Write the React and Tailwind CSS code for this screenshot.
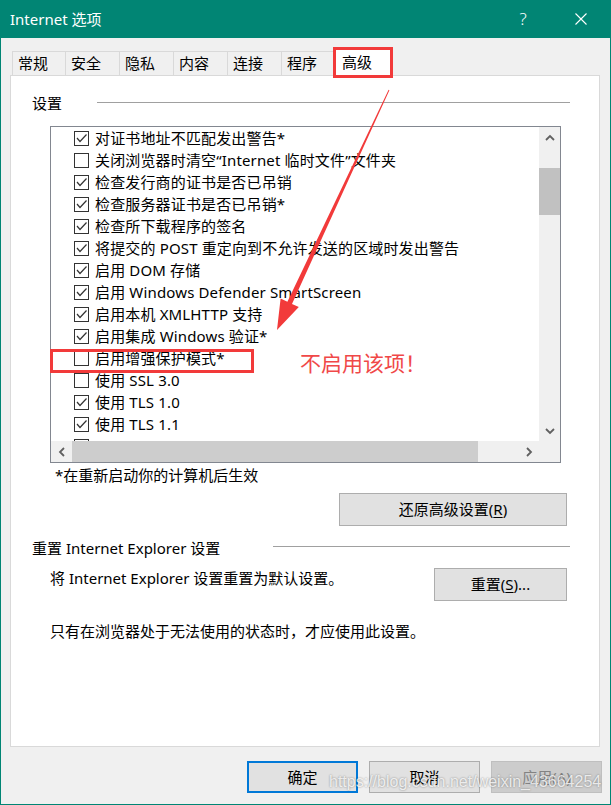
import React from 'react'

const FONT = "font-['Noto_Sans','Noto_Sans_CJK_SC',sans-serif]"

const ITEMS = [
  { label: '对证书地址不匹配发出警告*', checked: true },
  { label: '关闭浏览器时清空“Internet 临时文件”文件夹', checked: false },
  { label: '检查发行商的证书是否已吊销', checked: true },
  { label: '检查服务器证书是否已吊销*', checked: true },
  { label: '检查所下载程序的签名', checked: true },
  { label: '将提交的 POST 重定向到不允许发送的区域时发出警告', checked: true },
  { label: '启用 DOM 存储', checked: true },
  { label: '启用 Windows Defender SmartScreen', checked: true },
  { label: '启用本机 XMLHTTP 支持', checked: true },
  { label: '启用集成 Windows 验证*', checked: true },
  { label: '启用增强保护模式*', checked: false },
  { label: '使用 SSL 3.0', checked: false },
  { label: '使用 TLS 1.0', checked: true },
  { label: '使用 TLS 1.1', checked: true },
  // only the top of this row's box peeks out above the scrollbar
  { label: '', checked: true },
]

const TABS = ['常规', '安全', '隐私', '内容', '连接', '程序']

function Check({ checked }) {
  return (
    <span className="w-[15px] h-[15px] border border-[#333333] bg-white shrink-0 flex">
      {checked && (
        <svg width="13" height="13" viewBox="0 0 13 13">
          <path d="M2 6 L5 9.5 L11.5 2.5" fill="none" stroke="#333333" strokeWidth="1.2" />
        </svg>
      )}
    </span>
  )
}

// small scrollbar arrows
function Chevron({ dir }) {
  const d = {
    up: 'M1 6 L5 2 L9 6',
    down: 'M1 2 L5 6 L9 2',
    left: 'M6 1 L2 5 L6 9',
    right: 'M2 1 L6 5 L2 9',
  }[dir]
  const vertical = dir === 'up' || dir === 'down'
  return (
    <svg width={vertical ? 10 : 8} height={vertical ? 8 : 10} viewBox={vertical ? '0 0 10 8' : '0 0 8 10'}>
      <path d={d} fill="none" stroke="#606060" strokeWidth="1.8" />
    </svg>
  )
}

function Button({ children, className = '' }) {
  return (
    <button className={`h-[33px] bg-[#e1e1e1] border border-[#adadad] text-[15px] text-black leading-none flex items-center justify-center ${className}`}>
      {children}
    </button>
  )
}

export default function App() {
  return (
    <div className={`relative w-[611px] h-[805px] bg-[#018574] px-px pb-px flex flex-col text-black ${FONT}`}>
      {/* title bar */}
      <div className="h-[38px] shrink-0 flex items-center text-white">
        <span className="pl-[9px] text-[15px]">Internet 选项</span>
        <div className="ml-auto flex h-full">
          <div className="w-[58px] h-full flex items-center justify-center text-[17px] font-light">?</div>
          <div className="w-[58px] h-full flex items-center justify-center">
            <svg width="12" height="12" viewBox="0 0 12 12">
              <path d="M0.5 0.5 L11.5 11.5 M11.5 0.5 L0.5 11.5" stroke="white" strokeWidth="1.1" />
            </svg>
          </div>
        </div>
      </div>

      <div className="flex-1 bg-[#f0f0f0] flex flex-col">
        {/* tabs */}
        <div className="relative z-10 mt-[10px] pl-[11px] h-[27px] flex items-end">
          {TABS.map((t, i) => (
            <div
              key={t}
              className={`${i === 0 ? 'w-[54px]' : 'w-[55px] -ml-px'} h-[24px] border border-b-0 border-[#d9d9d9] pl-[5px] text-[15px] leading-[23px]`}
            >
              {t}
            </div>
          ))}
          <div className="-ml-[3px] -mb-px w-[58px] h-[28px] border border-b-0 border-[#d9d9d9] bg-white pl-[8px] text-[15px] leading-[27px]">
            高级
          </div>
        </div>

        {/* panel */}
        <div className="ml-[9px] mr-[10px] h-[672px] border border-[#d9d9d9] bg-white pl-[21px] pr-[29px] flex flex-col text-[15px]">
          <div className="mt-[16px] h-[22px] flex items-center">
            <span className="w-[65px] shrink-0 leading-[22px]">设置</span>
            <div className="flex-1 h-px bg-[#a0a0a0] -mt-[2px]" />
          </div>

          <div className="ml-[18px] mt-[12px] w-[511px] h-[337px] border border-[#828790] bg-white grid grid-cols-[1fr_21px] grid-rows-[1fr_21px]">
            <div className="overflow-hidden">
              {ITEMS.map((it, i) => (
                <div key={i} className="h-[22px] flex items-center pl-[23px] whitespace-nowrap tracking-[0.15px]">
                  <Check checked={it.checked} />
                  {it.label && <span className="ml-[6px] leading-[22px]">{it.label}</span>}
                </div>
              ))}
            </div>
            <div className="bg-[#f0f0f0] flex flex-col">
              <div className="h-[21px] flex items-center justify-center">
                <Chevron dir="up" />
              </div>
              <div className="flex-1 pt-[20px]">
                <div className="h-[47px] bg-[#c1c1c1]" />
              </div>
              <div className="h-[21px] flex items-center justify-center">
                <Chevron dir="down" />
              </div>
            </div>
            <div className="bg-[#f0f0f0] flex">
              <div className="w-[21px] flex items-center justify-center">
                <Chevron dir="left" />
              </div>
              <div className="flex-1">
                <div className="w-[406px] h-full bg-[#cdcdcd]" />
              </div>
              <div className="w-[21px] flex items-center justify-center">
                <Chevron dir="right" />
              </div>
            </div>
            <div className="bg-[#f0f0f0]" />
          </div>

          <div className="mt-px ml-[23px] h-[22px] leading-[22px]">*在重新启动你的计算机后生效</div>

          <div className="mt-[7px] flex justify-end">
            <Button className="w-[228px] mr-[3px]">
              还原高级设置(<span className="underline underline-offset-2">R</span>)
            </Button>
          </div>

          <div className="mt-[11px] h-[22px] flex items-center">
            <span className="w-[241px] shrink-0 leading-[22px]">重置 Internet Explorer 设置</span>
            <div className="flex-1 h-px bg-[#a0a0a0] -mt-[4px]" />
          </div>

          <div className="mt-[9px] flex justify-between items-start">
            <span className="ml-[18px] -mt-px leading-[22px]">将 Internet Explorer 设置重置为默认设置。</span>
            <Button className="w-[133px] mr-[3px]">
              重置(<span className="underline underline-offset-2">S</span>)...
            </Button>
          </div>

          <div className="mt-[19px] ml-[18px] leading-[22px]">只有在浏览器处于无法使用的状态时，才应使用此设置。</div>
        </div>

        {/* dialog buttons */}
        <div className="mt-[14px] flex justify-end gap-[11px] pr-[8px] text-[15px]">
          <button className="w-[111px] h-[32px] bg-[#e1e1e1] border-2 border-[#0078d7]">确定</button>
          <button className="w-[111px] h-[32px] bg-[#e1e1e1] border border-[#adadad]">取消</button>
          <button className="w-[111px] h-[32px] bg-[#cccccc] border border-[#bfbfbf] text-[#838383]">应用(A)</button>
        </div>
      </div>

      {/* red annotations */}
      <div className="absolute left-[333px] top-[47px] w-[60px] h-[31px] border-[3px] border-[#f23a3a] z-20" />
      <div className="absolute left-[50px] top-[349px] w-[204px] h-[24px] border-[3px] border-[#f23a3a] z-20" />
      <div className="absolute left-[300px] top-[351px] text-[21px] leading-[24px] text-[#f04848] z-20">不启用该项！</div>
      <svg className="absolute left-0 top-0 z-20 pointer-events-none" width="611" height="805" viewBox="0 0 611 805">
        <polygon
          points="389.4,90.2 388.6,89.8 287.4,301.7 280.6,298.6 277,330 298.8,307 292,303.9"
          fill="#f23a3a"
        />
      </svg>

      {/* watermark */}
      <div className="absolute left-[329px] top-[770px] text-[16px] font-['Liberation_Sans',Arial,sans-serif] text-white/80 [text-shadow:0_0_2px_rgba(0,0,0,0.45)] z-20 whitespace-nowrap">
        https://blog.csdn.net/weixin_43664254
      </div>
    </div>
  )
}
